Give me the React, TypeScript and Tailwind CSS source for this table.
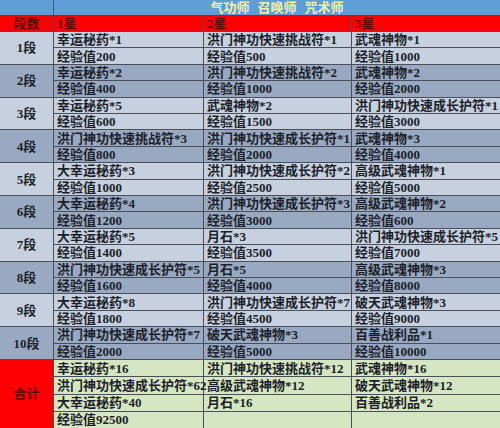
import React from 'react';

type Level = { name: string; cols: [string, string][] };

const levels: Level[] = [
  { name: '1段', cols: [['幸运秘药*1', '经验值200'], ['洪门神功快速挑战符*1', '经验值500'], ['武魂神物*1', '经验值1000']] },
  { name: '2段', cols: [['幸运秘药*2', '经验值400'], ['洪门神功快速挑战符*2', '经验值1000'], ['武魂神物*2', '经验值2000']] },
  { name: '3段', cols: [['幸运秘药*5', '经验值600'], ['武魂神物*2', '经验值1500'], ['洪门神功快速成长护符*1', '经验值3000']] },
  { name: '4段', cols: [['洪门神功快速挑战符*3', '经验值800'], ['洪门神功快速成长护符*1', '经验值2000'], ['武魂神物*3', '经验值4000']] },
  { name: '5段', cols: [['大幸运秘药*3', '经验值1000'], ['洪门神功快速成长护符*2', '经验值2500'], ['高级武魂神物*1', '经验值5000']] },
  { name: '6段', cols: [['大幸运秘药*4', '经验值1200'], ['洪门神功快速成长护符*3', '经验值3000'], ['高级武魂神物*2', '经验值600']] },
  { name: '7段', cols: [['大幸运秘药*5', '经验值1400'], ['月石*3', '经验值3500'], ['洪门神功快速成长护符*5', '经验值7000']] },
  { name: '8段', cols: [['洪门神功快速成长护符*5', '经验值1600'], ['月石*5', '经验值4000'], ['高级武魂神物*3', '经验值8000']] },
  { name: '9段', cols: [['大幸运秘药*8', '经验值1800'], ['洪门神功快速成长护符*7', '经验值4500'], ['破天武魂神物*3', '经验值9000']] },
  { name: '10段', cols: [['洪门神功快速成长护符*7', '经验值2000'], ['破天武魂神物*3', '经验值5000'], ['百善战利品*1', '经验值10000']] },
];

const totals: string[][] = [
  ['幸运秘药*16', '洪门神功快速成长护符*62', '大幸运秘药*40', '经验值92500'],
  ['洪门神功快速挑战符*12', '高级武魂神物*12', '月石*16', ''],
  ['武魂神物*16', '破天武魂神物*12', '百善战利品*2', ''],
];

const colW = ['w-[150px]', 'w-[148px]', 'flex-1'];

export default function App() {
  return (
    <div
      className="w-[500px] h-[428px] overflow-hidden bg-white text-[13px] font-bold text-[#1c1f2a] flex flex-col"
      style={{ fontFamily: '"Liberation Serif", "Noto Sans CJK SC", serif' }}
    >
      {/* title */}
      <div className="flex h-[16px] bg-[#5f9dd6] border-b border-[#3f4a5a]">
        <div className="w-[54px] border-r border-[#3f5d80]" />
        <div className="flex-1 flex items-center justify-center text-[13px] leading-none text-[#f3f0a4] gap-[8px]">
          <span>气功师</span>
          <span>召唤师</span>
          <span>咒术师</span>
        </div>
      </div>

      {/* header */}
      <div className="flex h-[16px] bg-[#fe0000] border-b border-[#4a4f5a] text-[#5c0000] leading-none">
        <div className="w-[54px] border-r border-[#4a4f5a] flex items-center justify-center">段数</div>
        <div className="w-[150px] border-r border-[#4a4f5a] flex items-center pl-[3px]">1星</div>
        <div className="w-[148px] border-r border-[#4a4f5a] flex items-center pl-[3px]">2星</div>
        <div className="flex-1 flex items-center pl-[3px]">3星</div>
      </div>

      {/* levels */}
      {levels.map((lv, i) => {
        const bg = i % 2 === 0 ? 'bg-[#c6d0de]' : 'bg-[#99a9c2]';
        return (
          <div key={lv.name} className={`flex h-[32.8px] border-b border-[#4a4f5a] ${bg}`}>
            <div className="w-[54px] border-r border-[#4a4f5a] flex items-center justify-center leading-none">{lv.name}</div>
            {lv.cols.map((c, j) => (
              <div key={j} className={`${colW[j]} flex flex-col ${j < 2 ? 'border-r border-[#4a4f5a]' : ''}`}>
                <div className="flex-1 flex items-center pl-[3px] leading-none whitespace-nowrap border-b border-[#4a4f5a]">{c[0]}</div>
                <div className="flex-1 flex items-center pl-[3px] leading-none whitespace-nowrap">{c[1]}</div>
              </div>
            ))}
          </div>
        );
      })}

      {/* totals */}
      <div className="flex flex-1 bg-[#d6e6c2]">
        <div className="w-[54px] bg-[#fe0000] border-r border-[#4a4f5a] flex items-center justify-center text-[#5c0000] leading-none">合计</div>
        {totals.map((col, j) => (
          <div key={j} className={`${colW[j]} flex flex-col ${j < 2 ? 'border-r border-[#4a4f5a]' : ''}`}>
            {col.map((t, k) => (
              <div
                key={k}
                className={`flex-1 flex items-center pl-[3px] leading-none whitespace-nowrap ${k < 3 ? 'border-b border-[#4a4f5a]' : ''}`}
              >
                {t}
              </div>
            ))}
          </div>
        ))}
      </div>
    </div>
  );
}
